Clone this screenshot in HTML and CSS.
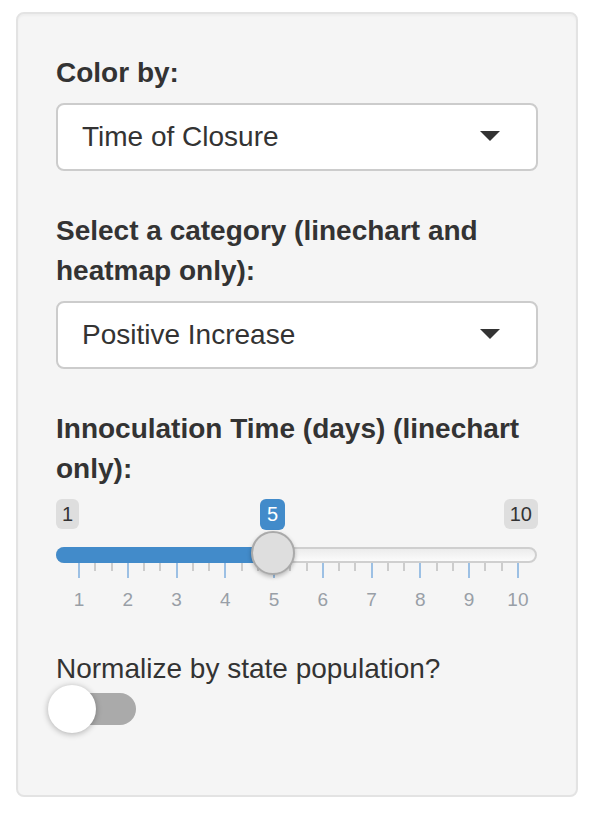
FILE: index.html
```html
<!DOCTYPE html>
<html>
<head>
<meta charset="utf-8">
<link rel="stylesheet" href="styles.css">
</head>
<body>
<div class="panel">
  <div class="group">
    <label class="lbl">Color by:</label>
    <div class="select">
      <span class="sel-text">Time of Closure</span>
      <span class="caret"></span>
    </div>
  </div>
  <div class="group">
    <label class="lbl">Select a category (linechart and heatmap only):</label>
    <div class="select">
      <span class="sel-text">Positive Increase</span>
      <span class="caret"></span>
    </div>
  </div>
  <div class="group slider-group">
    <label class="lbl">Innoculation Time (days) (linechart only):</label>
    <div class="slider">
      <div class="irs-labels">
        <span class="irs-minmax">1</span>
        <span class="irs-single">5</span>
        <span class="irs-minmax">10</span>
      </div>
      <div class="rail">
        <div class="bar"></div>
        <div class="handle"></div>
      </div>
      <div class="ticks">
        <i class="maj"></i><i></i><i></i>
        <i class="maj"></i><i></i><i></i>
        <i class="maj"></i><i></i><i></i>
        <i class="maj"></i><i></i><i></i>
        <i class="maj"></i><i></i><i></i>
        <i class="maj"></i><i></i><i></i>
        <i class="maj"></i><i></i><i></i>
        <i class="maj"></i><i></i><i></i>
        <i class="maj"></i><i></i><i></i>
        <i class="maj"></i>
      </div>
      <div class="tick-labels">
        <span>1</span><span>2</span><span>3</span><span>4</span><span>5</span>
        <span>6</span><span>7</span><span>8</span><span>9</span><span>10</span>
      </div>
    </div>
  </div>
  <div class="group last">
    <div class="plain">Normalize by state population?</div>
    <div class="switch">
      <div class="switch-track"></div>
      <div class="switch-knob"></div>
    </div>
  </div>
</div>
</body>
</html>
```
FILE: styles.css
```css
html, body {
  margin: 0;
  padding: 0;
  background: #ffffff;
}
body {
  font-family: "Liberation Sans", Arial, sans-serif;
  color: #333333;
}
.panel {
  box-sizing: border-box;
  margin: 12px 0 0 16px;
  width: 562px;
  height: 785px;
  background: #f5f5f5;
  border: 2px solid #e3e3e3;
  border-radius: 8px;
  padding: 39px 38px 0 38px;
  box-shadow: inset 0 2px 2px rgba(0,0,0,0.03);
}
.group {
  margin-bottom: 40px;
}
.group.slider-group {
  margin-bottom: 38px;
}
.lbl {
  display: block;
  font-weight: bold;
  font-size: 28px;
  line-height: 40px;
  margin-bottom: 10px;
}
.select {
  box-sizing: border-box;
  height: 68px;
  background: #ffffff;
  border: 2px solid #cccccc;
  border-radius: 8px;
  display: flex;
  align-items: center;
  justify-content: space-between;
  padding: 0 36px 0 24px;
}
.sel-text {
  font-size: 28px;
  line-height: 40px;
  color: #333333;
}
.caret {
  width: 0;
  height: 0;
  border-left: 10px solid transparent;
  border-right: 10px solid transparent;
  border-top: 10px solid #333333;
  margin-top: -2px;
}
/* slider */
.slider {
  position: relative;
}
.irs-labels {
  position: relative;
  display: flex;
  justify-content: space-between;
  height: 30px;
}
.irs-minmax, .irs-single {
  font-size: 20px;
  line-height: 26px;
  padding: 2px 6px;
  border-radius: 6px;
  background: #dedede;
  color: #333333;
}
.irs-single {
  position: absolute;
  left: 204px;
  top: 0;
  background: #428bca;
  color: #ffffff;
  padding: 2px 7px 3px 7px;
}
.rail {
  position: relative;
  box-sizing: border-box;
  margin-top: 18px;
  height: 16px;
  width: 481px;
  border: 2px solid #cfcfcf;
  border-radius: 8px;
  background: linear-gradient(#ececec, #fbfbfb);
}
.bar {
  position: absolute;
  left: -2px;
  top: -2px;
  height: 16px;
  width: 218px;
  background: #428bca;
  border-radius: 8px 0 0 8px;
}
.handle {
  position: absolute;
  box-sizing: border-box;
  left: 193px;
  top: -18px;
  width: 44px;
  height: 44px;
  border-radius: 50%;
  background: #dedede;
  border: 2px solid #aaaaaa;
  box-shadow: 0 2px 4px rgba(0,0,0,0.25);
  z-index: 2;
}
.ticks {
  display: flex;
  justify-content: space-between;
  align-items: flex-start;
  margin: 0 19px 0 22px;
  height: 15px;
}
.ticks i {
  display: block;
  width: 2px;
  height: 8px;
  background: #cccccc;
}
.ticks i.maj {
  height: 15px;
  background: #9cc0e4;
}
.tick-labels {
  display: flex;
  justify-content: space-between;
  margin: 11px 0 0 3px;
}
.tick-labels span {
  width: 40px;
  text-align: center;
  font-size: 19px;
  line-height: 22px;
  color: #999fa7;
}
/* switch */
.group.last {
  margin-bottom: 0;
}
.plain {
  font-size: 28px;
  line-height: 40px;
}
.switch {
  position: relative;
  margin-top: -4px;
  height: 48px;
  width: 82px;
}
.switch-track {
  position: absolute;
  left: 0;
  top: 8px;
  width: 80px;
  height: 32px;
  border-radius: 16px;
  background: #aaaaaa;
}
.switch-knob {
  position: absolute;
  left: -8px;
  top: 0;
  width: 48px;
  height: 48px;
  border-radius: 50%;
  background: #ffffff;
  box-shadow: 0 1px 6px rgba(0,0,0,0.3);
}
```
